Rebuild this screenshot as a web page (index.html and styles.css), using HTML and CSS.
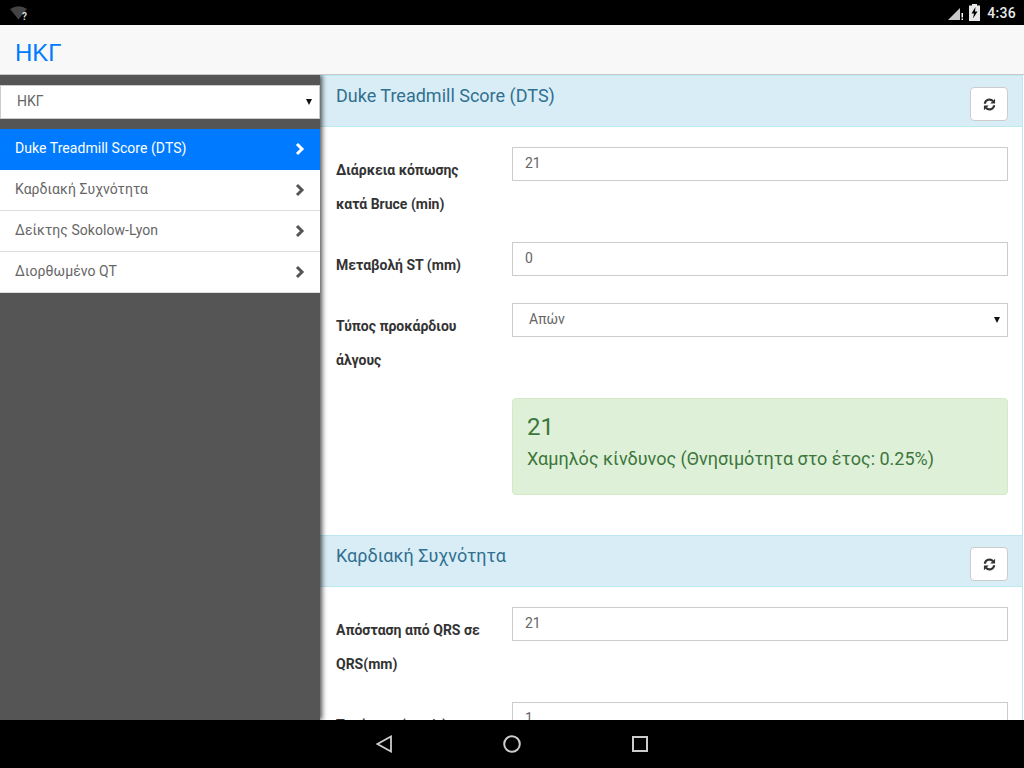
FILE: index.html
```html
<!DOCTYPE html>
<html>
<head>
  <title>ΗΚΓ</title>
  <meta charset="UTF-8">
  <link rel="stylesheet" href="styles.css">
</head>
<body>
  <div class="statusbar">
    <svg class="wifi" width="24" height="16" viewBox="0 0 24 16">
      <path d="M0 4 Q9 -1.500 17 4 L8.500 14.500 Z" fill="#444"/>
      <text x="12" y="15" class="wifi-q">?</text>
    </svg>
    <svg class="signal" width="16" height="16" viewBox="0 0 16 16">
      <path d="M0 15 L12 3 V15 Z" fill="#c8c8c8"/>
      <path d="M13.500 8 H15 V12.500 H13.500 Z M13.500 13.500 H15 V15 H13.500 Z" fill="#fff"/>
    </svg>
    <svg class="battery" width="11" height="17" viewBox="0 0 11 17">
      <path d="M3 0 H8 V1.500 H11 V17 H0 V1.500 H3 Z" fill="#e8e8e8"/>
      <path d="M6.500 3 L2.500 9.500 H5 L4 14.500 L8.500 7.500 H6 Z" fill="#000"/>
    </svg>
    <span class="clock">4:36</span>
  </div>

  <div class="navbar">ΗΚΓ</div>

  <div class="main">
    <div class="sidebar">
      <div class="side-select">
        <span>ΗΚΓ</span>
        <span class="caret"></span>
      </div>
      <ul class="menu">
        <li class="active"><span>Duke Treadmill Score (DTS)</span><svg class="chev" width="10" height="14" viewBox="0 0 10 14"><path d="M2 2 L7 7 L2 12" fill="none" stroke="currentColor" stroke-width="3"/></svg></li>
        <li><span>Καρδιακή Συχνότητα</span><svg class="chev" width="10" height="14" viewBox="0 0 10 14"><path d="M2 2 L7 7 L2 12" fill="none" stroke="currentColor" stroke-width="3"/></svg></li>
        <li><span>Δείκτης Sokolow-Lyon</span><svg class="chev" width="10" height="14" viewBox="0 0 10 14"><path d="M2 2 L7 7 L2 12" fill="none" stroke="currentColor" stroke-width="3"/></svg></li>
        <li><span>Διορθωμένο QT</span><svg class="chev" width="10" height="14" viewBox="0 0 10 14"><path d="M2 2 L7 7 L2 12" fill="none" stroke="currentColor" stroke-width="3"/></svg></li>
      </ul>
    </div>

    <div class="content">
      <div class="panel">
        <div class="panel-heading">
          <h3>Duke Treadmill Score (DTS)</h3>
          <button class="btn"><svg width="13" height="13" viewBox="0 0 14 14"><path d="M2 6.200 A5 5 0 0 1 10.800 3.500 M12 7.800 A5 5 0 0 1 3.200 10.500" fill="none" stroke="#333" stroke-width="2.400"/><path d="M13 0.800 V6 H7.800 Z M1 13.200 V8 H6.200 Z" fill="#333"/></svg></button>
        </div>
        <div class="panel-body">
          <div class="row">
            <label>Διάρκεια κόπωσης κατά Bruce (min)</label>
            <div class="field">21</div>
          </div>
          <div class="row">
            <label>Μεταβολή ST (mm)</label>
            <div class="field">0</div>
          </div>
          <div class="row">
            <label>Τύπος προκάρδιου άλγους</label>
            <div class="field select"><span>Απών</span><span class="caret"></span></div>
          </div>
          <div class="row">
            <div class="alert">
              <div class="alert-num">21</div>
              <div class="alert-text">Χαμηλός κίνδυνος (Θνησιμότητα στο έτος: 0.25%)</div>
            </div>
          </div>
        </div>
      </div>

      <div class="panel">
        <div class="panel-heading">
          <h3>Καρδιακή Συχνότητα</h3>
          <button class="btn"><svg width="13" height="13" viewBox="0 0 14 14"><path d="M2 6.200 A5 5 0 0 1 10.800 3.500 M12 7.800 A5 5 0 0 1 3.200 10.500" fill="none" stroke="#333" stroke-width="2.400"/><path d="M13 0.800 V6 H7.800 Z M1 13.200 V8 H6.200 Z" fill="#333"/></svg></button>
        </div>
        <div class="panel-body">
          <div class="row">
            <label>Απόσταση από QRS σε QRS(mm)</label>
            <div class="field">21</div>
          </div>
          <div class="row">
            <label>Ταχύτητα (mm/s)</label>
            <div class="field">1</div>
          </div>
        </div>
      </div>
    </div>
  </div>

  <div class="navkeys">
    <svg width="16" height="18" viewBox="0 0 16 18"><path d="M15 1.500 V16.500 L1.500 9 Z" fill="none" stroke="#ccc" stroke-width="1.800"/></svg>
    <svg width="18" height="18" viewBox="0 0 18 18"><circle cx="9" cy="9" r="7.800" fill="none" stroke="#ccc" stroke-width="2"/></svg>
    <svg width="16" height="16" viewBox="0 0 16 16"><rect x="1" y="1" width="14" height="14" fill="none" stroke="#ccc" stroke-width="2"/></svg>
  </div>
</body>
</html>
```

FILE: styles.css
```css
* {
  box-sizing: border-box;
}
html, body {
  height: 768px;
}
body {
  margin: 0;
  display: flex;
  flex-direction: column;
  overflow: hidden;
  font-family: Roboto, "Liberation Sans", sans-serif;
  font-size: 14px;
  color: #333;
  background-color: #fff;
}
.statusbar {
  flex: 0 0 25px;
  display: flex;
  align-items: center;
  padding: 0 8px 0 10px;
  background-color: #000;
}
.wifi {
  margin-right: auto;
}
.wifi-q {
  font-size: 10px;
  font-weight: 700;
  fill: #ddd;
}
.signal {
  margin-right: 5px;
}
.battery {
  margin-right: 7px;
}
.clock {
  color: #e8e8e8;
  font-size: 14px;
  font-weight: 500;
  letter-spacing: 0.3px;
}
.navbar {
  flex: 0 0 50px;
  padding: 7px 15px 0;
  line-height: 42px;
  font-family: "Liberation Sans", Arial, sans-serif;
  font-size: 24px;
  color: #007bff;
  background-color: #f8f8f8;
  border-bottom: 1px solid #c8c8c8;
}
.main {
  flex: 1;
  display: flex;
  min-height: 0;
  overflow: hidden;
}
.sidebar {
  flex: 0 0 320px;
  position: relative;
  z-index: 1;
  padding-top: 10px;
  background-color: #555;
  box-shadow: 2px 0 5px rgba(0, 0, 0, 0.7);
}
.side-select {
  display: flex;
  justify-content: space-between;
  align-items: center;
  height: 34px;
  padding: 0 7px 2px 16px;
  color: #666;
  background-color: #fff;
  border: 1px solid #ccc;
}
.caret {
  width: 0;
  height: 0;
  margin-top: 2px;
  border-left: 3.500px solid transparent;
  border-right: 3.500px solid transparent;
  border-top: 6px solid #111;
}
.menu {
  list-style: none;
  margin: 10px 0 0;
  padding: 0;
  background-color: #fff;
}
.menu li {
  display: flex;
  justify-content: space-between;
  align-items: center;
  height: 41px;
  padding: 0 15px;
  color: #666;
  border-bottom: 1px solid #ddd;
  letter-spacing: 0.05px;
}
.menu li span {
  margin-top: -2px;
}
.menu li.active {
  color: #fff;
  background-color: #007bff;
  border-bottom-color: #007bff;
}
.chev {
  color: #555;
}
.active .chev {
  color: #fff;
}
.content {
  flex: 1;
  min-width: 0;
  overflow: hidden;
}
.panel {
  margin-right: 1px;
  border-right: 1px solid #bce8f1;
}
.panel-heading {
  display: flex;
  justify-content: space-between;
  height: 52px;
  padding: 10px 14px 0 16px;
  background-color: #d9edf7;
  border-top: 1px solid #bce8f1;
  border-bottom: 1px solid #bce8f1;
}
.panel-heading h3 {
  margin: 1px 0 0;
  font-size: 18px;
  font-weight: 400;
  line-height: 18px;
  color: #31708f;
}
.btn {
  width: 38px;
  height: 34px;
  margin-top: 1px;
  padding: 0;
  display: flex;
  align-items: center;
  justify-content: center;
  background-color: #fff;
  border: 1px solid #ccc;
  border-radius: 4px;
}
.panel-body {
  padding: 20px 14px 40px 16px;
}
.row {
  display: flex;
  margin-bottom: 21px;
}
.row:last-child {
  margin-bottom: 0;
}
.row label {
  flex: 0 0 176px;
  padding: 6px 20px 0 0;
  font-weight: 700;
  line-height: 34px;
  color: #333;
}
.field {
  flex: 1;
  height: 34px;
  padding: 0 12px;
  line-height: 30px;
  color: #666;
  border: 1px solid #ccc;
}
.select {
  display: flex;
  justify-content: space-between;
  align-items: center;
  padding: 0 7px 2px 16px;
}
.alert {
  margin-left: 176px;
  flex: 1;
  height: 97px;
  padding: 15px 14px;
  color: #3c763d;
  background-color: #dff0d8;
  border: 1px solid #d6e9c6;
  border-radius: 4px;
}
.alert-num {
  font-size: 24px;
  line-height: 26px;
}
.alert-text {
  margin-top: 6px;
  font-size: 18px;
  line-height: 26px;
}
.navkeys {
  flex: 0 0 48px;
  display: flex;
  align-items: center;
  justify-content: center;
  gap: 111px;
  background-color: #000;
}
```
